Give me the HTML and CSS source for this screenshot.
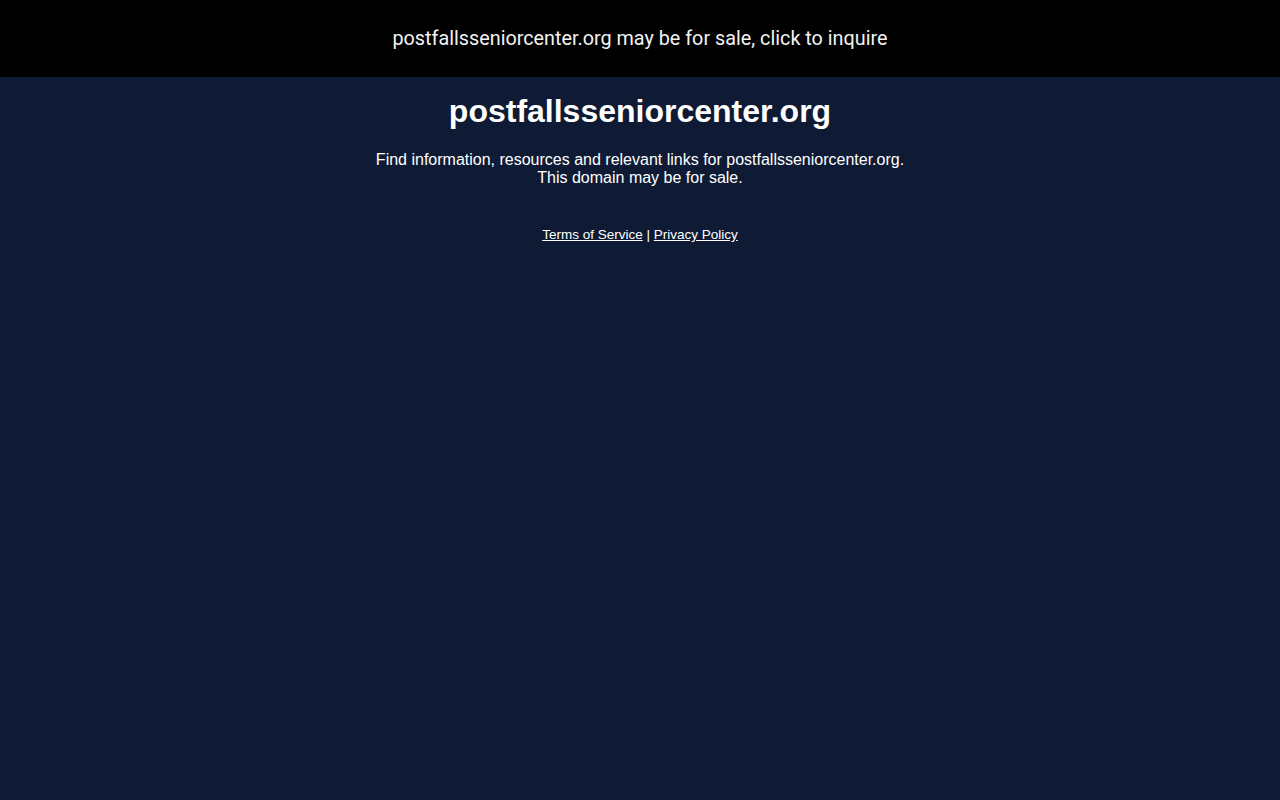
FILE: index.html
```html
<!DOCTYPE html>
<html>
<head>
<meta charset="utf-8">
<link rel="stylesheet" href="styles.css">
</head>
<body>
<div class="banner"><a class="banner-link" href="#">postfallsseniorcenter.org may be for sale, click to inquire</a></div>
<main class="content">
<h1 class="title">postfallsseniorcenter.org</h1>
<p class="desc">Find information, resources and relevant links for postfallsseniorcenter.org.<br>This domain may be for sale.</p>
<div class="legal"><a href="#">Terms of Service</a> | <a href="#">Privacy Policy</a></div>
</main>
</body>
</html>
```
FILE: styles.css
```css
html, body {
  margin: 0;
  padding: 0;
  background: #0f1b35;
  color: #ffffff;
  font-family: "Liberation Sans", Arial, sans-serif;
}
.banner {
  background: #000000;
  height: 77px;
  box-sizing: border-box;
  padding-bottom: 1px;
  display: flex;
  align-items: center;
  justify-content: center;
}
.banner-link {
  color: #f2f2f2;
  text-decoration: none;
  font-family: Roboto, sans-serif;
  font-size: 19.8px;
}
.content {
  text-align: center;
}
.title {
  font-size: 32px;
  font-weight: bold;
  margin: 16px 0 0;
  line-height: 37px;
}
.desc {
  font-size: 16px;
  line-height: 18px;
  margin: 21px 0 0;
}
.legal {
  font-size: 13.5px;
  margin-top: 40px;
}
.legal a {
  color: #ffffff;
}
```
